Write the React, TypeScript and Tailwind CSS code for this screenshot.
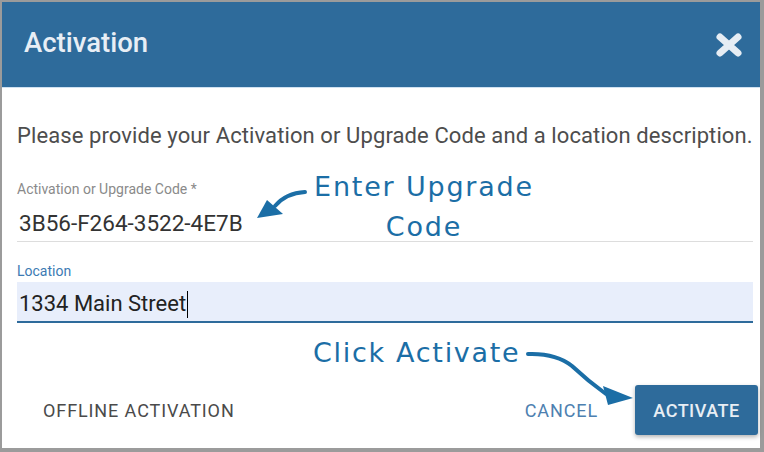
const roboto = { fontFamily: "Roboto, 'Liberation Sans', sans-serif" }
const note = { fontFamily: "'DejaVu Sans', 'Open Sans', sans-serif" }

function CloseIcon() {
  return (
    <svg width="28" height="26" viewBox="0 0 28 26" className="mt-[3px]">
      <path d="M5 5 L23 21 M23 5 L5 21" stroke="#e6edf4" strokeWidth="7" strokeLinecap="round" />
    </svg>
  )
}

export default function App() {
  return (
    <div className="relative h-[452px] w-[764px] overflow-hidden bg-white" style={roboto}>
      <div className="flex h-full flex-col border-t-2 border-l-2 border-r-4 border-b-4 border-[#9b9b9b]">
        {/* header */}
        <div className="flex h-[86px] shrink-0 items-center justify-between border-b border-[#cfe1f1] bg-[#2e6b9b] pb-[3px] pl-[22px] pr-[17px]">
          <h1 className="text-[27.5px] font-medium leading-[30px] text-[#e8eef5]">Activation</h1>
          <CloseIcon />
        </div>

        {/* body */}
        <div className="flex flex-col pl-[15px] pr-[7px]">
          <p className="mt-[35px] whitespace-nowrap text-[22px] leading-[26px] tracking-[0.1px] text-[#4d4d4d]">
            Please provide your Activation or Upgrade Code and a location description.
          </p>

          <label className="mt-[32px] text-[14px] leading-[16px] text-[#8a8a8a]">Activation or Upgrade Code *</label>
          <div className="border-b border-[#dddddd] pt-[12px] pb-[4px]">
            <div className="pl-[2px] text-[22.5px] leading-[28px] text-[#333333]">3B56-F264-3522-4E7B</div>
          </div>

          <label className="mt-[21px] text-[14px] leading-[16px] text-[#3d7ab3]">Location</label>
          <div className="mt-[3px] h-[41px] border-b-2 border-[#2e6b9b] bg-[#e8eefb] pl-[2px] pt-[5px]">
            <div className="flex items-center text-[22px] leading-[34px] text-[#222222]">
              1334 Main Street
              <span className="ml-[1px] h-[27px] w-[1px] bg-black" />
            </div>
          </div>
        </div>

        {/* footer */}
        <div className="mt-auto mb-[13px] flex h-[50px] items-center justify-between pl-[41px] pr-[2px]">
          <button className="text-[18px] tracking-[0.9px] text-[#4a4a4a]">OFFLINE ACTIVATION</button>
          <div className="flex items-center gap-[37px]">
            <button className="text-[18px] tracking-[0.9px] text-[#4d80b0]">CANCEL</button>
            <button className="h-[50px] w-[123px] rounded-[3px] bg-[#2e6b9b] text-[18px] font-medium tracking-[0.5px] text-[#e8eef4] shadow-[0_2px_4px_rgba(0,0,0,0.3)]">
              ACTIVATE
            </button>
          </div>
        </div>
      </div>

      {/* annotations */}
      <div className="absolute left-[313px] top-[167px] w-[222px] text-center text-[27px] leading-[40px] tracking-[1.8px] text-[#1b6ea6]" style={note}>
        Enter Upgrade
        <br />
        Code
      </div>
      <div className="absolute left-[313px] top-[333px] text-[27px] leading-[40px] tracking-[1.7px] text-[#1b6ea6]" style={note}>
        Click Activate
      </div>
      <svg className="pointer-events-none absolute left-0 top-0" width="764" height="452" viewBox="0 0 764 452">
        <path d="M305 192 Q286 193 275 206" stroke="#1b6ea6" strokeWidth="4" fill="none" strokeLinecap="round" />
        <polygon points="257,218 267,200 283,214" fill="#1b6ea6" />
        <path d="M528 354 Q556 353 572 366 Q588 381 606 394" stroke="#1b6ea6" strokeWidth="4" fill="none" strokeLinecap="round" />
        <polygon points="633,398 603,386 608,405" fill="#1b6ea6" />
      </svg>
    </div>
  )
}
